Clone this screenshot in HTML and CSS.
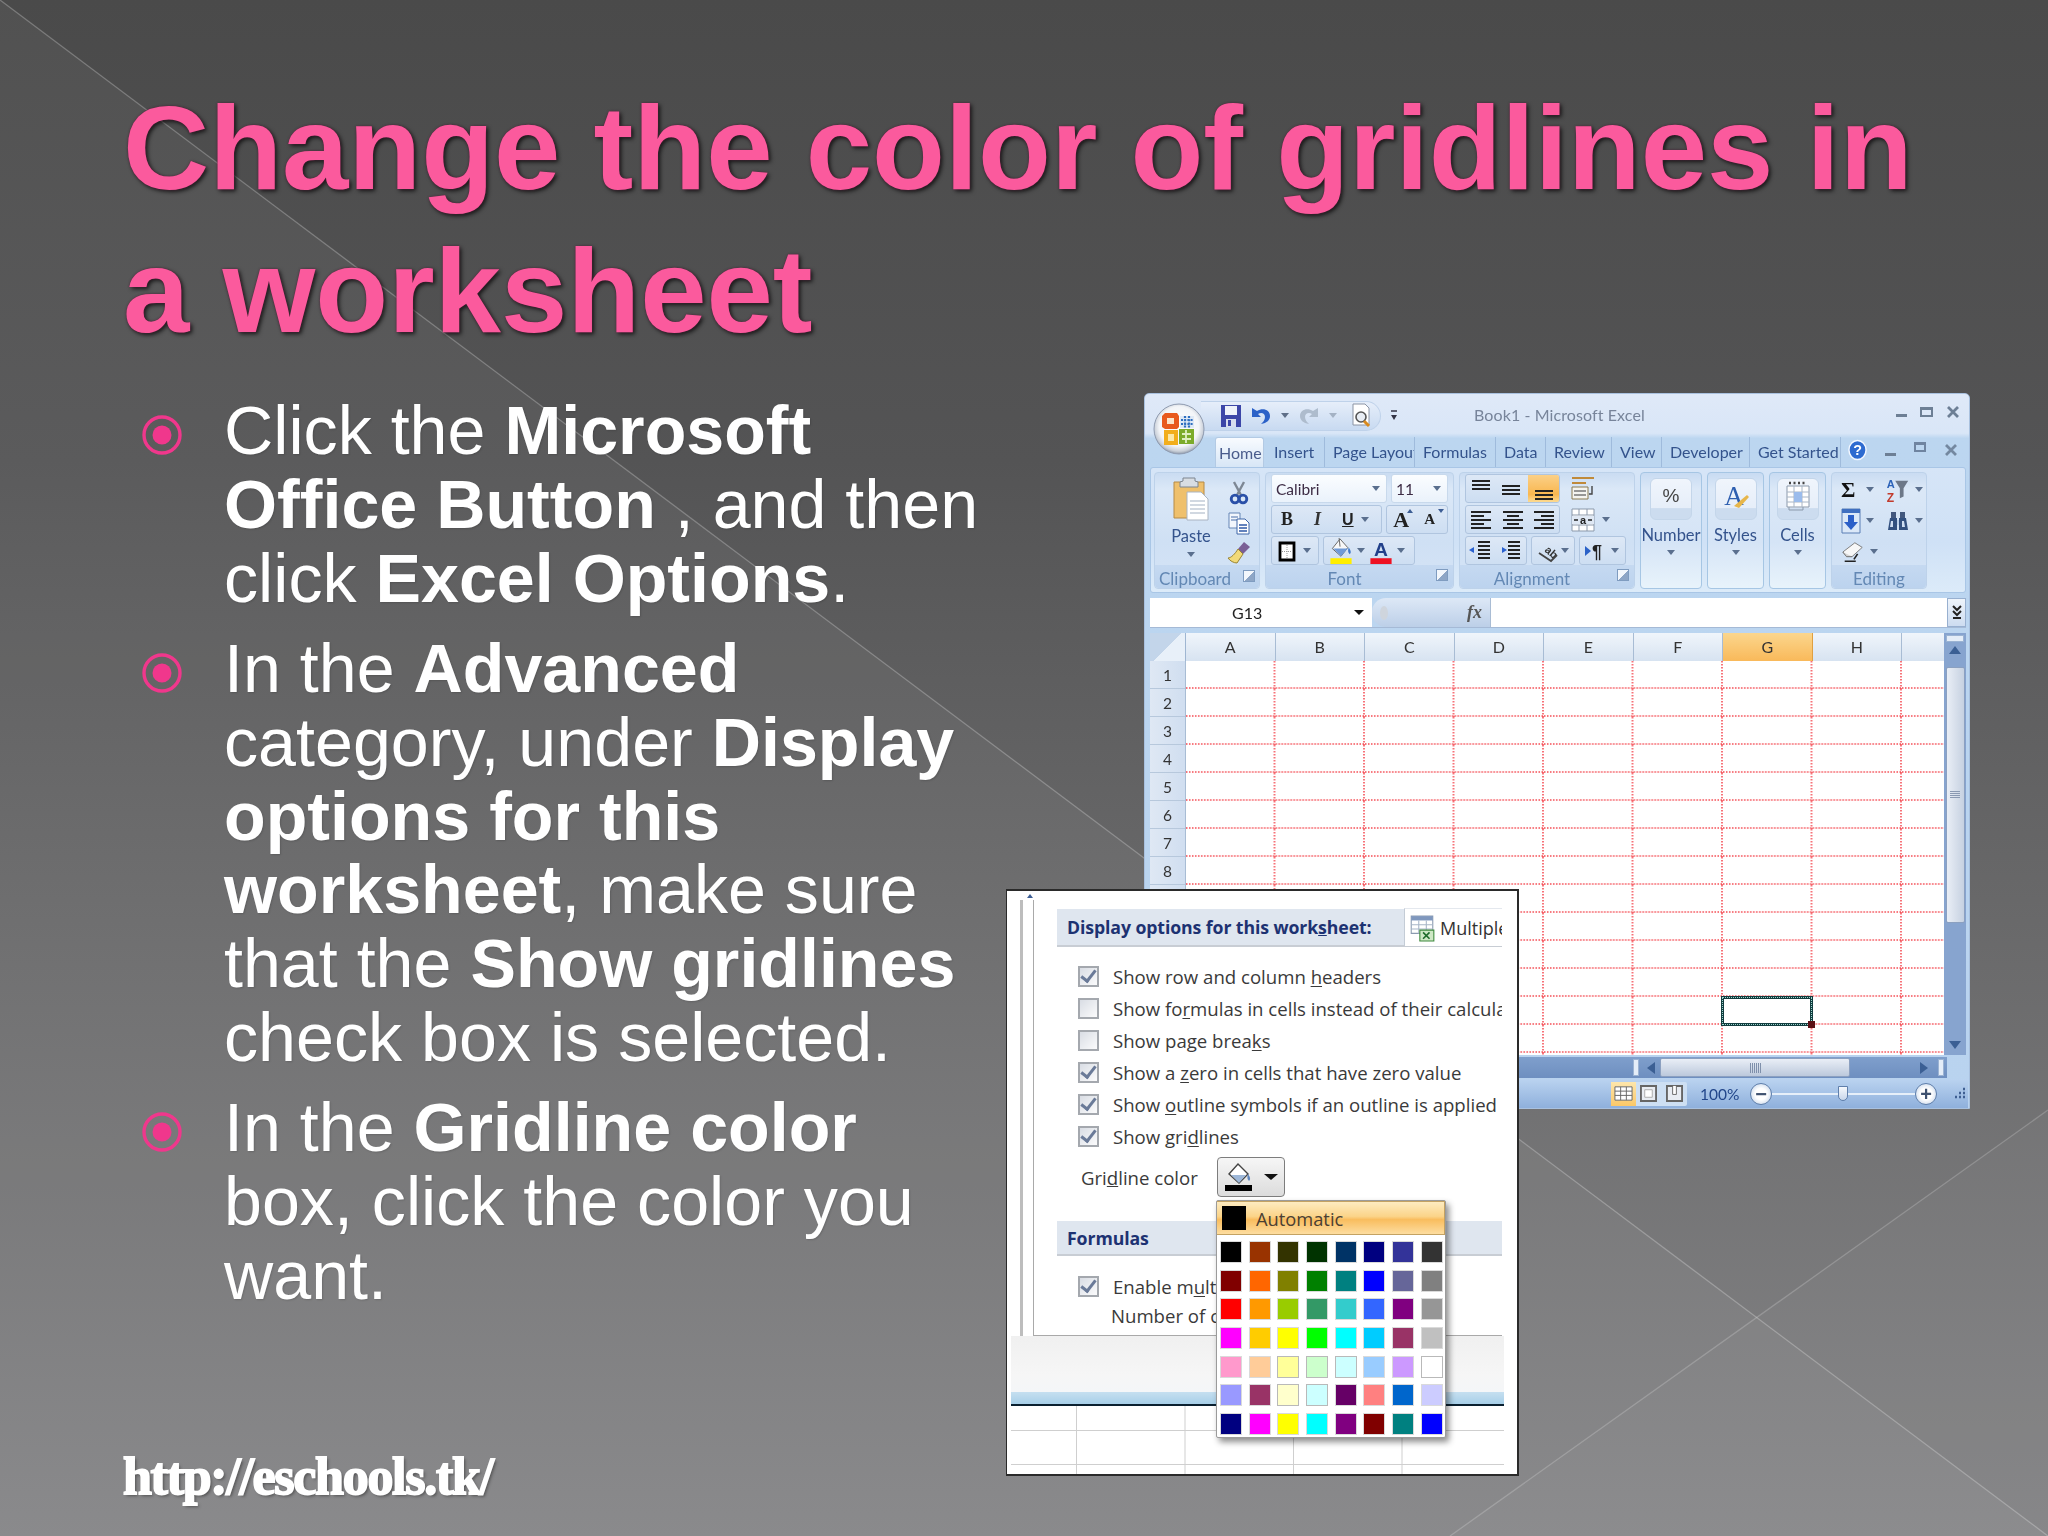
FILE: index.html
```html
<!DOCTYPE html>
<html lang="en">
<head>
<meta charset="utf-8">
<title>Change the color of gridlines in a worksheet</title>
<link rel="stylesheet" href="styles.css">
</head>
<body>
<svg width="0" height="0" class="defs">
  <defs>
    <symbol id="al-top" viewBox="0 0 24 24"><path d="M3 4h18M3 8h18M3 12h18" stroke="#222" stroke-width="2"/></symbol>
    <symbol id="al-mid" viewBox="0 0 24 24"><path d="M3 9h18M3 13h18M3 17h18" stroke="#222" stroke-width="2"/></symbol>
    <symbol id="al-bot" viewBox="0 0 24 24"><path d="M3 14h18M3 18h18M3 22h18" stroke="#222" stroke-width="2"/></symbol>
    <symbol id="al-left" viewBox="0 0 24 24"><path d="M2 4h20M2 8h13M2 12h20M2 16h13M2 20h20" stroke="#222" stroke-width="2"/></symbol>
    <symbol id="al-center" viewBox="0 0 24 24"><path d="M2 4h20M6 8h12M2 12h20M6 16h12M2 20h20" stroke="#222" stroke-width="2"/></symbol>
    <symbol id="al-right" viewBox="0 0 24 24"><path d="M2 4h20M9 8h13M2 12h20M9 16h13M2 20h20" stroke="#222" stroke-width="2"/></symbol>
    <symbol id="ind-l" viewBox="0 0 24 24"><path d="M9 3h12M9 7h12M9 11h12M9 15h12M9 19h12" stroke="#222" stroke-width="2"/><path d="M7 11H5V8l-5 3 5 3v-3z" fill="#2b62d0"/></symbol>
    <symbol id="ind-r" viewBox="0 0 24 24"><path d="M9 3h12M9 7h12M9 11h12M9 15h12M9 19h12" stroke="#222" stroke-width="2"/><path d="M0 11h3V8l5 3-5 3v-3z" fill="#2b62d0"/></symbol>
  </defs>
</svg>
<main class="slide">
  <svg class="backdrop" viewBox="0 0 2048 1536" preserveAspectRatio="none" aria-hidden="true">
    <polygon points="0,0 2048,1536 0,1536" fill="#fff" fill-opacity="0.045"/>
    <polygon points="2048,1110 1450,1536 2048,1536" fill="#fff" fill-opacity="0.025"/>
    <path d="M0 0L2048 1536" stroke="#fff" stroke-opacity="0.26" stroke-width="1.3" fill="none"/>
    <path d="M2048 1110L1450 1536" stroke="#fff" stroke-opacity="0.2" stroke-width="1.3" fill="none"/>
  </svg>

  <h1 class="title">Change the color of gridlines in a worksheet</h1>

  <div class="content">
    <ul class="bullets">
      <li><svg class="marker" viewBox="0 0 40 40" aria-hidden="true"><circle cx="20" cy="20" r="18" fill="none" stroke="#f0378c" stroke-width="3.4"/><circle cx="20" cy="20" r="9.5" fill="#f0378c"/></svg><p>Click the <b>Microsoft Office Button</b> , and then click <b>Excel Options</b>.</p></li>
      <li><svg class="marker" viewBox="0 0 40 40" aria-hidden="true"><circle cx="20" cy="20" r="18" fill="none" stroke="#f0378c" stroke-width="3.4"/><circle cx="20" cy="20" r="9.5" fill="#f0378c"/></svg><p>In the <b>Advanced</b> category, under <b>Display options for this worksheet</b>, make sure that the <b>Show gridlines</b> check box is selected.</p></li>
      <li><svg class="marker" viewBox="0 0 40 40" aria-hidden="true"><circle cx="20" cy="20" r="18" fill="none" stroke="#f0378c" stroke-width="3.4"/><circle cx="20" cy="20" r="9.5" fill="#f0378c"/></svg><p>In the <b>Gridline color</b> box, click the color you want.</p></li>
    </ul>

    <div class="figures">
      <section class="excel">
        <svg class="office-btn" viewBox="0 0 52 52" aria-hidden="true">
          <defs><radialGradient id="orb" cx="50%" cy="45%" r="55%"><stop offset="0" stop-color="#fff"/><stop offset=".72" stop-color="#f3f5f8"/><stop offset=".9" stop-color="#c9cfd8"/><stop offset="1" stop-color="#8f9aaa"/></radialGradient></defs>
          <circle cx="26" cy="26" r="25" fill="url(#orb)" stroke="#8f9bb0"/>
          <path d="M9 13l3-3h12l2 3v11l-2 2H12l-3-2z" fill="#e8591c"/><path d="M14 15h7v6h-7z" fill="#fbe3c8"/>
          <path d="M27 13h14v12H27z" fill="#dfe9f5"/><path d="M28 17h12M28 21h12M32 13v12M36 13v12" stroke="#2f6fc0" stroke-width="2.2" stroke-dasharray="2 1.2"/>
          <path d="M11 27h14v15H11z" fill="#f2ae1c"/><path d="M15 31h6v7h-6z" fill="#fbe8a8"/>
          <path d="M26 26h15v15H26z" fill="#7cab2a"/><path d="M29 31h9M29 36h9M33 27v13" stroke="#dff0c0" stroke-width="1.8"/>
        </svg>

        <header class="titlebar">
          <div class="qat">
            <svg class="q-save" viewBox="0 0 20 22" aria-hidden="true"><path d="M0 0h20v22H0z" fill="#3c46a8"/><path d="M4 1h12v9H4z" fill="#eef2fa"/><path d="M5 14h10v8H5z" fill="#d8deee"/><path d="M7 15h3v6H7z" fill="#3c46a8"/></svg>
            <svg class="q-ico" viewBox="0 0 20 22" aria-hidden="true"><path d="M1 3v9h9L7 9c3-2 7-1 7 3 0 3-2 5-4 7 6-1 9-4 9-8 0-6-7-9-13-5z" fill="#2c62c8"/></svg>
            <span class="arrow gray dark"></span>
            <svg class="q-ico" viewBox="0 0 20 22" aria-hidden="true"><path d="M19 3v9h-9l3-3c-3-2-7-1-7 3 0 3 2 5 4 7-6-1-9-4-9-8 0-6 7-9 13-5z" fill="#aebccd"/></svg>
            <span class="arrow gray"></span>
            <svg class="q-prev" viewBox="0 0 22 26" aria-hidden="true"><path d="M2 1h12l4 4v17H2z" fill="#fff" stroke="#8b94a4"/><circle cx="10" cy="14" r="5" fill="#e8edf4" stroke="#555" stroke-width="1.6"/><path d="M13 18l5 5" stroke="#d98a1e" stroke-width="3"/></svg>
          </div>
          <svg class="q-more" viewBox="0 0 8 14" aria-hidden="true"><path d="M1 2h6" stroke="#334" stroke-width="1.5"/><path d="M1 6h6l-3 5z" fill="#334"/></svg>
          <span class="doc-title">Book1 - Microsoft Excel</span>
          <div class="winctl">
            <span class="w-min"></span><span class="w-max"></span>
            <svg viewBox="0 0 14 14" class="w-x" aria-hidden="true"><path d="M2 2l10 10M12 2L2 12" stroke="#6d7f95" stroke-width="2.8"/></svg>
          </div>
        </header>

        <nav class="tabs">
          <span class="tab on t49">Home</span><span class="tab t61">Insert</span><span class="tab t90">Page Layout</span><span class="tab t81">Formulas</span><span class="tab t50">Data</span><span class="tab t66">Review</span><span class="tab t50">View</span><span class="tab t88">Developer</span><span class="tab t91">Get Started</span>
          <div class="docctl">
            <svg class="help" viewBox="0 0 20 22" aria-hidden="true"><ellipse cx="10" cy="11" rx="9" ry="10" fill="#2e6bd0" stroke="#f4f8ff" stroke-width="1.5"/><text x="10" y="16" text-anchor="middle" class="help-q">?</text></svg>
            <span class="w-min"></span><span class="w-rest"></span>
            <svg viewBox="0 0 14 14" class="w-x" aria-hidden="true"><path d="M2 2l10 10M12 2L2 12" stroke="#7488a0" stroke-width="2.8"/></svg>
          </div>
        </nav>

        <div class="ribbon">
          <div class="group g-clip">
            <div class="g-body clipbody">
              <div class="paste">
                <svg class="paste-ico" viewBox="0 0 36 44" aria-hidden="true"><path d="M1 5h30v36H1z" fill="#efc06c" stroke="#b58a46"/><path d="M10 1h12v3l3 1v5H7V5l3-1z" fill="#d8dde3" stroke="#7c8590"/><path d="M14 15h14l7 7v21H14z" fill="#fff" stroke="#a9b4c2"/><path d="M17 24h15M17 28h15M17 32h15M17 36h15" stroke="#c2cbd8" stroke-width="1.3"/></svg>
                <span class="lbl">Paste</span><span class="arrow"></span>
              </div>
              <div class="clip-tools">
                <svg viewBox="0 0 20 24" aria-hidden="true"><path d="M5 1l7 13M15 1L8 14" stroke="#7d8794" stroke-width="2.4"/><circle cx="6" cy="18" r="3.8" fill="none" stroke="#2a50a8" stroke-width="2.8"/><circle cx="14" cy="18" r="3.8" fill="none" stroke="#2a50a8" stroke-width="2.8"/></svg>
                <svg viewBox="0 0 22 24" aria-hidden="true"><path d="M1 2h11v15H1z" fill="#f2f6fc" stroke="#6585b5"/><path d="M3 6h7M3 9h7" stroke="#4a6fa8"/><path d="M9 8h8l4 4v11H9z" fill="#fff" stroke="#3f66a8"/><path d="M11 14h8M11 17h8M11 20h8" stroke="#2f5aa8" stroke-width="1.4"/></svg>
                <svg viewBox="0 0 24 24" aria-hidden="true"><path d="M17 1l6 5-7 7-5-5z" fill="#7a5f96"/><path d="M11 8l5 5-6 9c-3 0-7-2-9-5 3 0 7-4 10-9z" fill="#f2da78" stroke="#9a8534"/></svg>
              </div>
            </div>
            <div class="g-label"><span>Clipboard</span><i class="launch"></i></div>
          </div>

          <div class="group g-font">
            <div class="g-body stack">
              <div class="row">
                <span class="combo f-name">Calibri<span class="arrow right"></span></span>
                <span class="combo f-size">11<span class="arrow right"></span></span>
              </div>
              <div class="row">
                <span class="combo f-style"><b class="b">B</b><i class="i">I</i><u class="u">U</u><span class="arrow"></span></span>
                <span class="combo f-grow"><span class="big">A</span><span class="small">A</span></span>
              </div>
              <div class="row">
                <span class="combo f-border"><svg viewBox="0 0 18 22" aria-hidden="true"><path d="M2 3h14v17H2z" fill="#fff" stroke="#000" stroke-width="2.8"/><path d="M9 5v13M4 11.5h10" stroke="#999" stroke-dasharray="1 1"/></svg><span class="arrow"></span></span>
                <span class="combo f-color">
                  <svg viewBox="0 0 24 28" aria-hidden="true"><path d="M11 2l8 9-7 9-9-8z" fill="#f8f8f8" stroke="#666"/><path d="M10 1l1 9" stroke="#666"/><path d="M4 12h15l-7 8z" fill="#6f9ad8"/><path d="M20 11c2 3 3 5 1 7-2-2-2-4-1-7z" fill="#3f77c8"/><path d="M1 22h22v6H1z" fill="#ffee00"/></svg><span class="arrow"></span>
                  <svg viewBox="0 0 24 28" aria-hidden="true"><text x="12" y="20" text-anchor="middle" class="ac">A</text><path d="M1 22h22v6H1z" fill="#ee1122"/></svg><span class="arrow"></span>
                </span>
              </div>
            </div>
            <div class="g-label center"><span>Font</span><i class="launch"></i></div>
          </div>

          <div class="group g-align">
            <div class="g-body stack">
              <div class="row">
                <span class="combo a-trio"><svg aria-hidden="true"><use href="#al-top"/></svg><svg aria-hidden="true"><use href="#al-mid"/></svg><span class="picked"><svg aria-hidden="true"><use href="#al-bot"/></svg></span></span>
                <svg class="wrap-ico" viewBox="0 0 24 26" aria-hidden="true"><path d="M1 2h22M1 7h14" stroke="#c08a3a" stroke-width="2.2"/><path d="M1 11h16v12H1z" fill="#f4f4f0" stroke="#8a7a50"/><path d="M3 15h12M3 19h12" stroke="#777" stroke-width="1.6"/><path d="M21 10v8h-3" stroke="#444" stroke-width="1.4" fill="none"/></svg>
              </div>
              <div class="row">
                <span class="combo a-trio"><svg aria-hidden="true"><use href="#al-left"/></svg><svg aria-hidden="true"><use href="#al-center"/></svg><svg aria-hidden="true"><use href="#al-right"/></svg></span>
                <svg class="wrap-ico" viewBox="0 0 24 26" aria-hidden="true"><path d="M1 2h22v22H1z" fill="#fff" stroke="#8b99ab"/><path d="M1 8h22M1 18h22M8 2v6M16 2v6M8 18v6M16 18v6" stroke="#8b99ab"/><path d="M1 9h22v8H1z" fill="#dfe8f4"/><text x="12" y="16.5" text-anchor="middle" class="mg">a</text><path d="M3 13h4M17 13h4" stroke="#222" stroke-width="1.6"/></svg><span class="arrow"></span>
              </div>
              <div class="row">
                <span class="combo a-ind"><svg aria-hidden="true"><use href="#ind-l"/></svg><svg aria-hidden="true"><use href="#ind-r"/></svg></span>
                <span class="combo a-orient"><svg viewBox="0 0 26 24" aria-hidden="true"><text x="9" y="12" class="abc" transform="rotate(40 9 12)">ab</text><path d="M4 14l12 8 6-6" stroke="#444" stroke-width="1.8" fill="none"/></svg><span class="arrow"></span></span>
                <span class="combo a-rtl"><svg viewBox="0 0 24 24" aria-hidden="true"><path d="M2 7l6 5-6 5z" fill="#2b62c8"/><text x="9" y="19" class="pil">¶</text></svg><span class="arrow"></span></span>
              </div>
            </div>
            <div class="g-label center"><span>Alignment</span><i class="launch"></i></div>
          </div>

          <div class="group solo g-number">
            <span class="solo-btn"><span class="pct">%</span></span>
            <span class="lbl">Number</span><span class="arrow"></span>
          </div>
          <div class="group solo g-styles">
            <span class="solo-btn"><svg viewBox="0 0 28 30" aria-hidden="true"><text x="12" y="24" text-anchor="middle" class="sty">A</text><path d="M12 25l13-11 2 2-10 11z" fill="#e7b64a"/></svg></span>
            <span class="lbl">Styles</span><span class="arrow"></span>
          </div>
          <div class="group solo g-cells">
            <span class="solo-btn"><svg viewBox="0 0 26 30" aria-hidden="true"><path d="M2 5h22v21H2z" fill="#fff" stroke="#8b99ab"/><path d="M2 11h22M2 16h22M2 21h22M9 5v21M17 5v21" stroke="#a9b6c6"/><path d="M9 11h8v10H9z" fill="#9bbcec"/><path d="M4 2h18" stroke="#444" stroke-width="2.4" stroke-dasharray="2 2.5"/><path d="M4 26v3h14v-3" stroke="#8b99ab" fill="none"/></svg></span>
            <span class="lbl">Cells</span><span class="arrow"></span>
          </div>

          <div class="group g-edit">
            <div class="g-body edit-grid">
              <span class="ed"><span class="sigma">Σ</span><span class="arrow"></span></span>
              <span class="ed"><svg viewBox="0 0 24 28" aria-hidden="true"><text x="0" y="12" class="az">A</text><text x="0" y="27" class="zz">Z</text><path d="M9 4h14l-5 8v9l-4 2V12z" fill="#6d7888"/></svg><span class="arrow"></span></span>
              <span class="ed"><svg class="fillico" viewBox="0 0 20 26" aria-hidden="true"><path d="M1 1h18v24H1z" fill="#dbe8f8" stroke="#5b7fb5"/><path d="M1 1h18v4H1z" fill="#3f6fc0"/><path d="M7 7h6v7h4l-7 8-7-8h4z" fill="#2b5fc8"/></svg><span class="arrow"></span></span>
              <span class="ed"><svg viewBox="0 0 24 24" aria-hidden="true"><path d="M5 3h5v6H5zM14 3h5v6h-5z" fill="#42587e"/><path d="M4 9h7v12H2zM13 9h7l2 12h-9z" fill="#32507f"/><path d="M11 11h2v5h-2z" fill="#bcd0ea"/><path d="M5 12h2v6H4zM16 12h2l1 6h-3z" fill="#cddcf0"/></svg><span class="arrow"></span></span>
              <span class="ed"><svg viewBox="0 0 26 24" aria-hidden="true"><path d="M15 2l8 5-11 10H6l-4-5z" fill="#f7f7f7" stroke="#777"/><path d="M2 12l4 5h6" fill="#d5d5d5" stroke="#777"/><path d="M4 22h12M14 20l4-6" stroke="#222" stroke-width="1.8" fill="none"/></svg><span class="arrow"></span></span>
            </div>
            <div class="g-label center"><span>Editing</span></div>
          </div>
        </div>

        <div class="formula">
          <span class="namebox">G13<span class="arrow black"></span></span>
          <span class="fxbox"><i class="fx-dot"></i><em>fx</em></span>
          <span class="input"></span>
          <span class="expand"><svg viewBox="0 0 12 20" aria-hidden="true"><path d="M2 3l4 4 4-4M2 8l4 4 4-4" stroke="#222" stroke-width="2" fill="none"/><path d="M2 15h8" stroke="#222" stroke-width="2"/></svg></span>
        </div>

        <div class="sheetwrap">
          <div class="sheet">
            <div class="colhead">
              <span class="corner"></span>
              <span class="col">A</span><span class="col">B</span><span class="col">C</span><span class="col">D</span><span class="col">E</span><span class="col">F</span><span class="col sel">G</span><span class="col">H</span><span class="col last"></span>
            </div>
            <div class="cellsarea">
              <div class="rowhead"><span>1</span><span>2</span><span>3</span><span>4</span><span>5</span><span>6</span><span>7</span><span>8</span><span>9</span><span>10</span><span>11</span><span>12</span><span class="cur">13</span><span>14</span></div>
              <div class="gridarea">
                <svg class="gridsvg" aria-hidden="true">
                  <defs><pattern id="gl" width="89.5" height="28" patternUnits="userSpaceOnUse" x="0" y="0">
                    <path d="M0 27H89.5" stroke="#f4464e" stroke-width="1.5" stroke-dasharray="1.5 1.5"/>
                    <path d="M88.5 0V28" stroke="#f4464e" stroke-width="1.5" stroke-dasharray="1.5 1.5"/>
                  </pattern></defs>
                  <rect width="100%" height="100%" fill="url(#gl)"/>
                </svg>
                <div class="activecell"><i></i></div>
              </div>
            </div>
          </div>
          <div class="vscroll">
            <span class="v-split"></span>
            <span class="tri up"></span>
            <span class="v-thumb"><i></i></span>
            <span class="tri down"></span>
          </div>
        </div>

        <div class="hscroll">
          <span class="h-split"></span><span class="tri left"></span>
          <span class="h-thumb"><i></i></span>
          <span class="tri right"></span><span class="h-split"></span>
        </div>

        <footer class="status">
          <div class="views">
            <span class="view on"><svg viewBox="0 0 20 16" aria-hidden="true"><path d="M1 1h18v14H1zM1 5.5h18M1 10h18M7 1v14M13 1v14" fill="#fff" stroke="#666"/></svg></span>
            <span class="view"><svg viewBox="0 0 20 18" aria-hidden="true"><path d="M2 1h16v16H2z" fill="#e8ecf2" stroke="#666" stroke-width="2"/><path d="M6 5h8v8H6z" fill="#fff" stroke="#aaa"/></svg></span>
            <span class="view"><svg viewBox="0 0 20 18" aria-hidden="true"><path d="M2 1h16v16H2z" fill="#e8ecf2" stroke="#666" stroke-width="2"/><path d="M8 1v9h4V1" fill="#fff" stroke="#666"/></svg></span>
          </div>
          <span class="zoom">100%</span>
          <span class="zbtn">−</span>
          <div class="zslider"><span class="zthumb"></span></div>
          <span class="zbtn">+</span>
          <svg class="grip" viewBox="0 0 16 16" aria-hidden="true"><path d="M12 3h2M8 7h2M12 7h2M4 11h2M8 11h2M12 11h2" stroke="#3f5f92" stroke-width="2.4" fill="none"/></svg>
        </footer>
      </section>

      <section class="popup">
        <div class="pop-main">
          <span class="rail"></span>
          <div class="options">
            <div class="band first"><h3>Display options for this work<u>s</u>heet:</h3>
              <span class="multi"><svg viewBox="0 0 24 26" aria-hidden="true"><path d="M2 2h20v16H2z" fill="#fff" stroke="#8b9bb0"/><path d="M2 2h20v4H2z" fill="#7f97bd"/><path d="M2 10h20M2 14h20M9 6v12M16 6v12" stroke="#a8b6c8"/><path d="M10 15h13v10H10z" fill="#cfe8c6" stroke="#3d8a3d"/><path d="M13 17l6 6M19 17l-6 6" stroke="#1e6b2a" stroke-width="1.5"/></svg><span>Multiple</span></span>
            </div>
            <label class="opt spaced"><span class="check on"></span><span>Show row and column <u>h</u>eaders</span></label>
            <label class="opt"><span class="check"></span><span>Show fo<u>r</u>mulas in cells instead of their calculated results</span></label>
            <label class="opt"><span class="check"></span><span>Show page brea<u>k</u>s</span></label>
            <label class="opt"><span class="check on"></span><span>Show a <u>z</u>ero in cells that have zero value</span></label>
            <label class="opt"><span class="check on"></span><span>Show <u>o</u>utline symbols if an outline is applied</span></label>
            <label class="opt"><span class="check on"></span><span>Show gri<u>d</u>lines</span></label>
            <div class="colorrow"><span class="colorlbl">Gri<u>d</u>line color</span>
              <span class="colorbtn"><svg viewBox="0 0 30 30" aria-hidden="true"><path d="M14 2l10 10-9 9L5 12z" fill="#fff" stroke="#444" stroke-width="1.4"/><path d="M7 13h15l-7 8z" fill="#9db7d8"/><path d="M24 12c2 3 3 5 1 7-2-2-2-4-1-7z" fill="#5f86bc"/><path d="M1 23h27v6H1z" fill="#000"/></svg><span class="arrow black big"></span></span>
            </div>
            <div class="band second"><h3>Formulas</h3></div>
            <label class="opt enable"><span class="check on"></span><span>Enable m<u>u</u>ltithreaded calculation</span></label>
            <div class="numrow">Number of calculation threads</div>
          </div>
        </div>
        <div class="pop-gray"></div>
        <div class="pop-blue"></div>
        <div class="mini-grid"></div>

        <div class="colormenu">
          <div class="auto"><span class="auto-sw"></span>Automatic</div>
          <div class="swatches">
            <span style="background:#000000"></span><span style="background:#993300"></span><span style="background:#333300"></span><span style="background:#003300"></span><span style="background:#003366"></span><span style="background:#000080"></span><span style="background:#333399"></span><span style="background:#333333"></span>
            <span style="background:#800000"></span><span style="background:#FF6600"></span><span style="background:#808000"></span><span style="background:#008000"></span><span style="background:#008080"></span><span style="background:#0000FF"></span><span style="background:#666699"></span><span style="background:#808080"></span>
            <span style="background:#FF0000"></span><span style="background:#FF9900"></span><span style="background:#99CC00"></span><span style="background:#339966"></span><span style="background:#33CCCC"></span><span style="background:#3366FF"></span><span style="background:#800080"></span><span style="background:#969696"></span>
            <span style="background:#FF00FF"></span><span style="background:#FFCC00"></span><span style="background:#FFFF00"></span><span style="background:#00FF00"></span><span style="background:#00FFFF"></span><span style="background:#00CCFF"></span><span style="background:#993366"></span><span style="background:#C0C0C0"></span>
            <span style="background:#FF99CC"></span><span style="background:#FFCC99"></span><span class="pale" style="background:#FFFF99"></span><span class="pale" style="background:#CCFFCC"></span><span class="pale" style="background:#CCFFFF"></span><span style="background:#99CCFF"></span><span style="background:#CC99FF"></span><span class="pale" style="background:#FFFFFF"></span>
            <span style="background:#9999FF"></span><span style="background:#993366"></span><span class="pale" style="background:#FFFFCC"></span><span class="pale" style="background:#CCFFFF"></span><span style="background:#660066"></span><span style="background:#FF8080"></span><span style="background:#0066CC"></span><span style="background:#CCCCFF"></span>
            <span style="background:#000080"></span><span style="background:#FF00FF"></span><span style="background:#FFFF00"></span><span style="background:#00FFFF"></span><span style="background:#800080"></span><span style="background:#800000"></span><span style="background:#008080"></span><span style="background:#0000FF"></span>
          </div>
        </div>
      </section>
    </div>
  </div>

  <footer class="site">http://eschools.tk/</footer>
</main>
</body>
</html>
```

FILE: styles.css
```css
* { box-sizing: border-box; }
html, body { margin: 0; padding: 0; }
body { width: 2048px; height: 1536px; overflow: hidden; background: #666; }
.defs { position: absolute; }

.slide {
  position: relative;
  width: 2048px;
  height: 1536px;
  overflow: hidden;
  padding: 76px 0 29px 123px;
  display: flex;
  flex-direction: column;
  font-family: "Liberation Sans", Arial, sans-serif;
  color: #fff;
  background: linear-gradient(180deg, #4a4a4a 0%, #545455 30%, #69696a 60%, #858587 100%);
}
.backdrop { position: absolute; inset: 0; width: 100%; height: 100%; }

.title {
  position: relative;
  margin: 0 0 31px;
  width: 1840px;
  font-size: 119.3px;
  line-height: 143px;
  font-weight: 700;
  color: #fb5a9d;
  text-shadow: 0 0 2px #5e2340, 2px 2px 4px rgba(0,0,0,.75);
}

.content { position: relative; display: flex; align-items: flex-start; }

.bullets { list-style: none; margin: 1px 0 0 19px; padding: 0; width: 842px; }
.bullets li { display: flex; gap: 42px; margin-bottom: 16.6px; }
.marker { flex: none; width: 40px; height: 40px; margin-top: 21px; }
.bullets p { margin: 0; font-size: 68.2px; line-height: 73.8px; text-shadow: 1px 1px 2px rgba(0,0,0,.15); }

.figures { position: relative; flex: none; width: 826px; margin-left: 160px; height: 716px; filter: blur(.5px); }

/* ---------- Excel window ---------- */
.excel {
  position: relative;
  width: 826px;
  height: 716px;
  padding: 0 3px 0 5px;
  display: flex;
  flex-direction: column;
  font-family: Lato, "Open Sans", sans-serif;
  font-size: 16px;
  color: #34538c;
  background: linear-gradient(180deg, #dfe9f8 0%, #d9e6f7 5.5%, #bcd6f0 6.2%, #b9d3ef 100%);
  border: 1px solid #a9c1df;
  border-radius: 5px 5px 0 0;
}
.office-btn { position: absolute; left: 8px; top: 9px; width: 52px; height: 52px; z-index: 2; }

.titlebar { position: relative; height: 43px; flex: none; display: flex; align-items: center; padding-left: 51px; }
.qat {
  width: 180px; height: 30px;
  display: flex; align-items: center; gap: 10px; padding-left: 20px;
  background: linear-gradient(180deg, #e6eefa, #c8daf1);
  border: 1px solid #bfd2ea; border-left: 0; border-radius: 0 15px 15px 0;
}
.q-save { width: 20px; height: 22px; }
.q-ico { width: 20px; height: 22px; }
.q-prev { width: 22px; height: 26px; margin-left: 4px; }
.q-more { width: 8px; height: 14px; margin: 0 0 0 9px; }
.doc-title { margin: -3px 0 0 76px; width: 176px; white-space: nowrap; font-size: 16px; letter-spacing: .1px; color: #77849a; }
.winctl { margin: -8px 0 0 auto; width: 70px; display: flex; align-items: center; gap: 13px; }
.w-min { width: 11px; height: 3px; background: #6d7f95; margin-top: 8px; }
.w-max { width: 13px; height: 10px; border: 2px solid #6d7f95; border-top-width: 3px; }
.w-rest { width: 12px; height: 10px; border: 2px solid #6f84a0; border-top-width: 3px; margin-top: -6px; }
.w-x { width: 14px; height: 14px; }

.tabs { height: 30px; flex: none; display: flex; align-items: stretch; padding-left: 65px; position: relative; }
.tab { flex: none; padding: 5px 0 0 8px; overflow: hidden; white-space: nowrap; border-right: 1px solid #9fbbdc; font-size: 16px; line-height: 20px; }
.tab.on { background: linear-gradient(180deg, #f8fbff, #d7e6f6); border: 1px solid #b3cae4; border-bottom: 0; border-radius: 3px 3px 0 0; padding-left: 3px; color: #4a5c8c; }
.t49 { width: 49px; } .t50 { width: 50px; } .t61 { width: 61px; padding-left: 10px; } .t66 { width: 66px; } .t81 { width: 81px; } .t88 { width: 88px; } .t90 { width: 90px; } .t91 { width: 91px; }
.docctl { display: flex; align-items: center; gap: 18px; margin: -4px 0 0 7px; }
.help { width: 19px; height: 22px; }
.help-q { font: 700 15px "Liberation Sans", sans-serif; fill: #fff; }

.ribbon {
  height: 126px; flex: none; margin: 0 0 5px; padding: 4px 0 3px 3px;
  display: flex; gap: 5px;
  background: linear-gradient(180deg, #d6e5f7, #cfe1f6 60%, #dcebf9);
  border: 1px solid #a9c6e6; border-radius: 3px;
}
.group {
  display: flex; flex-direction: column;
  background: linear-gradient(180deg, #cadcf2, #dbe8f7 14%, #cfe0f4 60%, #d5e4f6);
  border: 1px solid #bdd2ea; border-radius: 4px;
}
.g-clip { width: 106px; } .g-font { width: 189px; } .g-align { width: 176px; }
.g-number { width: 62px; } .g-styles, .g-cells { width: 57px; } .g-edit { width: 96px; }
.g-body { flex: 1; min-height: 0; }
.g-label {
  height: 23px; flex: none; display: flex; align-items: center; justify-content: space-between;
  padding: 3px 4px 0; font-size: 17px; color: #6388b4;
  background: linear-gradient(180deg, #c5d9f1, #bcd3ee);
  border-radius: 0 0 4px 4px;
}
.g-label.center { position: relative; justify-content: center; padding-right: 34px; }
.g-edit .g-label.center { padding-right: 4px; }
.g-label.center .launch { position: absolute; right: 5px; top: 4px; margin-top: 0; }
.launch { width: 12px; height: 12px; border: 1px solid #7f9cc0; background: linear-gradient(135deg, #f3f7fc 50%, #8ea6c6 50%); display: block; margin-top: -4px; }
.lbl { font-size: 16.5px; color: #34538c; line-height: 18px; }

.arrow { display: inline-block; flex: none; width: 0; height: 0; border: 4px solid transparent; border-top: 5px solid #5a6f8e; border-bottom: 0; }
.arrow.gray { border-top-color: #a4b2c4; }
.arrow.gray.dark { border-top-color: #5f6f88; }
.arrow.black { border-top-color: #111; border-width: 5px 5px 0; }
.arrow.big { border-width: 6px 7px 0; }
.arrow.right { margin-left: auto; margin-right: 6px; }

.clipbody { display: flex; padding: 4px 0 0 0; }
.paste { width: 72px; display: flex; flex-direction: column; align-items: center; padding: 0 16px; }
.paste-ico { width: 36px; height: 44px; flex: none; margin-bottom: 6px; }
.paste .lbl { margin-bottom: 7px; }
.clip-tools { display: flex; flex-direction: column; gap: 6px; padding-top: 4px; }
.clip-tools svg { width: 24px; height: 24px; }

.stack { display: flex; flex-direction: column; gap: 2px; padding: 1px 5px; }
.stack .row { display: flex; align-items: center; gap: 4px; height: 29px; }
.combo {
  height: 29px; display: flex; align-items: center;
  background: linear-gradient(180deg, #dde8f6, #cddef2);
  border: 1px solid #b0c5df; border-radius: 3px;
  color: #222;
}
.f-name { width: 118px; padding-left: 4px; background: linear-gradient(180deg, #fbfdff, #eaf2fb); border-color: #c8d9ec; font-size: 15.5px; color: #3d2c45; }
.f-size { width: 58px; padding-left: 4px; background: linear-gradient(180deg, #fbfdff, #eaf2fb); border-color: #c8d9ec; font-size: 15.5px; color: #3d2c45; }
.f-style { width: 112px; padding-left: 9px; font-family: "Liberation Serif", serif; font-size: 18px; color: #222; }
.f-style i { margin-left: 21px; font-weight: 700; color: #333; }
.f-style u { margin-left: 21px; font-family: "Liberation Sans", sans-serif; font-weight: 700; font-size: 16px; color: #222; }
.f-style .arrow { margin-left: 7px; }
.f-grow { position: relative; width: 62px; padding-left: 6px; gap: 15px; font-family: "Liberation Serif", serif; font-weight: 700; color: #222; }
.big { font-size: 22px; } .small { font-size: 15px; }
.big::after, .small::after { content: ""; position: absolute; top: 3px; width: 0; height: 0; border: 3px solid transparent; }
.big::after { left: 20px; border-top: 0; border-bottom: 4px solid #3c5d94; }
.small::after { right: 3px; border-bottom: 0; border-top: 4px solid #3c5d94; }
.f-border { width: 48px; padding-left: 6px; gap: 7px; }
.f-border svg { width: 18px; height: 22px; }
.f-color { width: 92px; padding-left: 5px; gap: 4px; }
.f-color svg { width: 24px; height: 27px; }
.ac { font: 700 20px "Liberation Sans", sans-serif; fill: #22408a; }
.a-trio { width: 95px; overflow: hidden; justify-content: space-between; padding: 0 3px; }
.a-trio svg { width: 24px; height: 24px; flex: none; }
.picked { width: 31px; height: 29px; margin-right: -3px; display: flex; align-items: center; justify-content: center; background: linear-gradient(180deg, #fbd18a, #f9b750 70%, #fddf9a); }
.wrap-ico { width: 24px; height: 26px; margin-left: 7px; }
.wrap-ico + .arrow { margin-left: 3px; }
.mg { font: 700 11px "Liberation Sans", sans-serif; fill: #222; }
.a-ind { width: 62px; justify-content: space-around; }
.a-ind svg { width: 24px; height: 24px; }
.a-orient { width: 44px; padding-left: 3px; gap: 0; }
.a-orient svg { width: 26px; height: 24px; }
.abc { font: 700 11px "Liberation Sans", sans-serif; fill: #333; }
.a-rtl { width: 47px; padding-left: 3px; gap: 4px; }
.a-rtl svg { width: 24px; height: 24px; }
.pil { font: 700 18px "Liberation Sans", sans-serif; fill: #222; }

.solo { align-items: center; padding-top: 5px; background: linear-gradient(180deg, #c8dbf2, #dbe8f7 14%, #d5e4f6 60%, #e8f3fb); border-color: #a6c6e4; }
.solo-btn { width: 42px; height: 42px; display: flex; align-items: center; justify-content: center; background: linear-gradient(180deg, #f0f5fc, #e6eef9 72%, #ccdcef 74%); border: 1px solid #c4d6ea; border-radius: 6px; margin-bottom: 6px; }
.solo .lbl { margin-bottom: 6px; }
.pct { font: 400 19px "Liberation Sans", sans-serif; color: #444; padding-bottom: 6px; }
.solo-btn svg { width: 28px; height: 30px; margin-bottom: 6px; }
.sty { font: 400 27px "Liberation Serif", serif; fill: #2e5fb0; }

.edit-grid { display: grid; grid-template-columns: 45px 46px; grid-auto-rows: 31px; padding: 1px 0 0 9px; }
.ed { display: flex; align-items: center; gap: 5px; color: #222; }
.ed svg { width: 24px; height: 26px; flex: none; }
.ed .fillico { width: 20px; height: 26px; }
.sigma { font: 700 22px "Liberation Serif", serif; width: 20px; color: #111; }
.az { font: 700 12px "Liberation Sans", sans-serif; fill: #2b62b8; }
.zz { font: 700 13px "Liberation Sans", sans-serif; fill: #c23a2b; }

.formula { height: 30px; flex: none; display: flex; align-items: stretch; color: #222; border-bottom: 1px solid #a5bad6; }
.namebox { width: 222px; display: flex; align-items: center; justify-content: space-between; padding: 0 8px 0 82px; background: #fff; font-size: 16px; }
.fxbox { width: 118px; display: flex; align-items: center; justify-content: space-between; padding: 0 8px; background: linear-gradient(180deg, #dde8f6, #bccfe8); border-radius: 14px 0 0 14px; }
.fx-dot { width: 8px; height: 14px; background: #cfd5dd; border-radius: 50%; }
.fxbox em { font: italic 700 18px "Liberation Serif", serif; color: #555; }
.input { flex: 1; background: #fff; border-left: 1px solid #a9bcd4; }
.expand { width: 19px; display: flex; align-items: center; justify-content: center; background: linear-gradient(180deg, #eef4fb, #cddcf0); border: 1px solid #98b0d0; }
.expand svg { width: 12px; height: 20px; }

.sheetwrap { flex: none; display: flex; height: 422px; margin-top: 5px; }
.sheet { width: 796px; overflow: hidden; }
.colhead { height: 28px; display: flex; }
.corner { width: 36px; flex: none; background: linear-gradient(135deg, #c3d5ea 50%, #e8f0f9 50%); border-right: 1px solid #9fb6d2; }
.col { width: 89.5px; flex: none; text-align: center; line-height: 28px; font-size: 16px; color: #333; background: linear-gradient(180deg, #f0f5fb, #d7e3f1); border-right: 1px solid #a8bcd4; }
.col.sel { background: linear-gradient(180deg, #fbd68d, #f9b95a); border-right-color: #e0a040; }
.col.last { width: 44px; }
.cellsarea { display: flex; height: 394px; background: #fff; }
.rowhead { width: 36px; flex: none; display: flex; flex-direction: column; background: linear-gradient(90deg, #dfe8f4, #d0def0); border-right: 1px solid #a8bcd4; }
.rowhead span { height: 28px; flex: none; text-align: center; line-height: 28px; font-size: 15.5px; color: #333; border-bottom: 1px solid #b7c8dc; }
.gridarea { position: relative; flex: 1; }
.gridsvg { display: block; width: 100%; height: 100%; }
.activecell { position: absolute; left: 535px; top: 335px; width: 92px; height: 30px; border: 3px solid #123c3e; outline: 1px dotted #9fd8d0; outline-offset: -2px; }
.activecell i { position: absolute; right: -5px; bottom: -5px; width: 7px; height: 7px; background: #5a0f14; }

.vscroll { width: 22px; flex: none; background: #87a4cf; display: flex; flex-direction: column; align-items: center; }
.v-split { width: 18px; height: 7px; margin-top: 2px; background: #e4edf8; border: 1px solid #9bb3d3; }
.tri { display: block; width: 0; height: 0; border: 6px solid transparent; }
.tri.up { border-top: 0; border-bottom: 8px solid #3b5f94; margin-top: 4px; }
.tri.down { border-bottom: 0; border-top: 8px solid #3b5f94; margin-top: 118px; }
.v-thumb { width: 19px; height: 256px; margin-top: 13px; background: linear-gradient(90deg, #e9eef6, #c6d1e1); border: 1px solid #8ba0c0; border-radius: 2px; display: flex; align-items: center; justify-content: center; }
.v-thumb i { width: 10px; height: 8px; background: repeating-linear-gradient(180deg, #8a99b2 0 1px, transparent 1px 2px); }
.hscroll { height: 21px; flex: none; margin-top: 2px; margin-right: 19px; padding-right: 3px; display: flex; align-items: center; justify-content: flex-end; background: linear-gradient(180deg, #7f9fcc, #6e8fc0); }
.h-split { width: 6px; height: 17px; background: #e4edf8; border: 1px solid #9bb3d3; }
.tri.left { border-left: 0; border-right: 8px solid #3b5f94; margin: 0 5px 0 8px; }
.tri.right { border-right: 0; border-left: 8px solid #3b5f94; margin: 0 10px 0 70px; }
.h-thumb { width: 190px; height: 19px; background: linear-gradient(180deg, #e9eef6, #bcc9dc); border: 1px solid #8ba0c0; border-radius: 2px; display: flex; align-items: center; justify-content: center; }
.h-thumb i { width: 11px; height: 10px; background: repeating-linear-gradient(90deg, #7f90ab 0 1px, transparent 1px 2px); }

.status { flex: 1; display: flex; align-items: center; margin-top: 1px; margin-right: -2px; padding: 0 0 0 461px; background: linear-gradient(180deg, #bad3f0, #8fb0dc); }
.views { width: 76px; height: 24px; display: flex; background: #cddff3; border-radius: 2px; }
.view { width: 25.3px; display: flex; align-items: center; justify-content: center; }
.view.on { background: linear-gradient(180deg, #fde6ac, #fbc868); }
.view svg { width: 19px; height: 17px; }
.zoom { margin-left: 13px; font-size: 15.5px; color: #22468a; width: 40px; }
.zbtn { width: 22px; height: 22px; border-radius: 50%; flex: none; margin-left: 10px; display: flex; align-items: center; justify-content: center; font: 700 20px/20px "Liberation Sans", sans-serif; color: #3f5270; background: radial-gradient(circle, #fff 40%, #b8cbe4); border: 1px solid #5f7fab; }
.zslider { position: relative; width: 143px; height: 2px; background: #e6eff9; }
.zthumb { position: absolute; left: 66px; top: -7px; width: 10px; height: 15px; background: linear-gradient(180deg, #f5f8fc, #c8d6ea); border: 1px solid #5f7fab; border-radius: 0 0 5px 5px; }
.zslider + .zbtn { margin-left: 0; }
.grip { width: 16px; height: 16px; margin-left: 14px; }

/* ---------- options dialog ---------- */
.popup {
  position: absolute; left: -138px; top: 496px;
  width: 513px; height: 587px;
  display: flex; flex-direction: column;
  background: #fff;
  border: 2px solid #2a2a2a;
  border-left-width: 1px;
  font-family: "Open Sans", "DejaVu Sans", sans-serif;
  font-size: 18.6px;
  color: #3a3a3a;
}
.pop-main { display: flex; height: 445px; flex: none; }
.rail { display: block; width: 3px; flex: none; margin: 9px 10px 0 13px; background: #bdbdbd; }
.options { width: 469px; flex: none; margin-top: 9px; padding: 9px 0 0 23px; overflow: hidden; white-space: nowrap; border-left: 1px solid #a9a9a9; border-bottom: 1px solid #a9a9a9; }
.band { height: 38px; width: 446px; display: flex; align-items: center; justify-content: space-between; padding-left: 10px; background: #dfe6ef; border-bottom: 2px solid #c8cdd4; }
.band h3 { margin: 0; font-size: 17.7px; font-weight: 700; color: #1d3272; letter-spacing: -.1px; }
.multi { width: 99px; height: 38px; display: flex; align-items: center; gap: 5px; padding-left: 4px; background: #fff; border-left: 1px solid #c4ccd6; border-top: 1px solid #e4e8ee; overflow: hidden; color: #333; font-size: 18px; }
.multi svg { width: 26px; height: 28px; flex: none; }
.opt { height: 32px; display: flex; align-items: center; gap: 14px; padding-left: 21px; }
.opt u { text-underline-offset: 2px; }
.opt.spaced { margin-top: 13px; }
.check { width: 21px; height: 21px; flex: none; border: 2px solid #a4a8ae; background: linear-gradient(135deg, #d9dde4, #fbfbfc); display: flex; align-items: center; justify-content: center; }
.check.on::after { content: ""; width: 6px; height: 12px; margin-top: -3px; border: solid #6a7a98; border-width: 0 3px 3px 0; transform: rotate(38deg); }
.colorrow { height: 40px; margin-top: 5px; display: flex; align-items: center; padding-left: 24px; }
.colorlbl { width: 136px; }
.colorbtn { width: 68px; height: 40px; display: flex; align-items: center; gap: 10px; padding-left: 6px; background: linear-gradient(180deg, #f6f6f6, #dcdcdc); border: 1px solid #7d7d7d; border-radius: 4px; }
.colorbtn svg { width: 30px; height: 30px; }
.band.second { margin-top: 24px; height: 35px; }
.opt.enable { margin-top: 14px; }
.numrow { height: 28px; line-height: 28px; padding-left: 54px; }
.pop-gray { height: 56px; flex: none; margin-left: 4px; margin-right: 13px; background: linear-gradient(180deg, #f0f0f0, #f6f6f6 70%, #f4f6f8); }
.pop-blue { height: 12px; flex: none; margin-left: 4px; margin-right: 13px; background: linear-gradient(180deg, #c5dff0, #a7cfe8); border-bottom: 2px solid #0a2030; box-sizing: content-box; }
.mini-grid {
  flex: 1; margin-left: 4px; margin-right: 13px;
  background-color: #fff;
  background-image:
    linear-gradient(#cfcfcf, #cfcfcf),
    linear-gradient(#cfcfcf, #cfcfcf),
    linear-gradient(90deg, #cfcfcf 1px, transparent 1px);
  background-size: 100% 1px, 100% 1px, 108.5px 100%;
  background-position: 0 24px, 0 58px, 65px 0;
  background-repeat: no-repeat, no-repeat, repeat-x;
}
.colormenu {
  position: absolute; left: 209px; top: 309px;
  width: 230px; height: 238px;
  background: #fff;
  border: 1px solid #9b9b9b;
  border-radius: 2px;
  box-shadow: 3px 4px 6px rgba(0,0,0,.45);
}
.auto { height: 34px; margin: 0; display: flex; align-items: center; gap: 10px; padding-left: 5px; font-size: 18.3px; color: #4a4033; background: linear-gradient(180deg, #fdebc0, #fbd489 45%, #f9bd5e 55%, #fddda0); border: 1px solid #c4a262; border-width: 1px 1px 1px 0; }
.auto-sw { width: 24px; height: 24px; background: #000; }
.swatches { display: grid; grid-template-columns: repeat(8, 20px); grid-auto-rows: 20px; gap: 8.7px; padding: 7px 0 0 4px; }
.swatches span { box-shadow: 0 0 0 1px rgba(150,150,150,.35); }
.swatches .pale { box-shadow: 0 0 0 1px #b9b9b9; }

.site {
  position: relative;
  margin-top: auto;
  height: 60px;
  font-family: "Liberation Serif", serif;
  font-size: 52px;
  line-height: 60px;
  font-weight: 700;
  letter-spacing: -1.3px;
  color: #fff;
  -webkit-text-stroke: 1.8px #fff;
  text-shadow: 2px 2px 3px rgba(40,40,40,.55);
}
```
